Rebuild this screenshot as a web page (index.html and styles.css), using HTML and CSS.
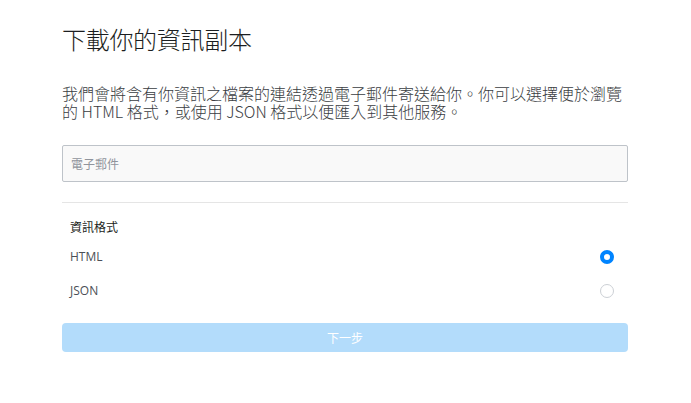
FILE: index.html
```html
<!DOCTYPE html>
<html lang="zh-Hant">
<head>
<meta charset="utf-8">
<link rel="stylesheet" href="styles.css">
</head>
<body>
<main class="page">
  <h1 class="title">下載你的資訊副本</h1>
  <p class="desc">我們會將含有你資訊之檔案的連結透過電子郵件寄送給你。你可以選擇便於瀏覽的 HTML 格式，或使用 JSON 格式以便匯入到其他服務。</p>
  <input class="email" type="text" placeholder="電子郵件">
  <hr class="divider">
  <div class="label">資訊格式</div>
  <div class="options">
    <label class="option">
      <span class="option-text">HTML</span>
      <span class="radio radio-on"></span>
    </label>
    <label class="option">
      <span class="option-text">JSON</span>
      <span class="radio"></span>
    </label>
  </div>
  <button class="next" type="button">下一步</button>
</main>
</body>
</html>
```

FILE: styles.css
```css
html, body {
  margin: 0;
  padding: 0;
  background: #ffffff;
}
body {
  font-family: "Open Sans", "Noto Sans CJK TC", sans-serif;
  color: #4b4f56;
}
.page {
  padding: 22px 63px 0 62px;
  display: flex;
  flex-direction: column;
}
.title {
  margin: 0;
  font-family: "Noto Sans CJK TC", sans-serif;
  font-size: 24px;
  font-weight: 300;
  line-height: 34px;
  color: #1c1e21;
  letter-spacing: -0.3px;
}
.desc {
  margin: 28px 0 0;
  font-family: "Noto Sans CJK TC", sans-serif;
  font-size: 16px;
  line-height: 18px;
  font-weight: 300;
  color: #3a3d42;
}
.email {
  margin-top: 25px;
  height: 37px;
  box-sizing: border-box;
  border: 1px solid #bec3c9;
  border-radius: 2px;
  background: #f9f9f9;
  padding: 0 8px;
  font-family: "Noto Sans CJK TC", sans-serif;
  font-size: 12px;
  color: #1c1e21;
  outline: none;
}
.email::placeholder {
  color: #90949c;
}
.divider {
  margin: 20px 0 0;
  border: 0;
  border-top: 1px solid #e5e5e5;
  height: 0;
}
.label {
  margin-top: 16px;
  font-family: "Noto Sans CJK TC", sans-serif;
  font-size: 12px;
  line-height: 16px;
  font-weight: 400;
  color: #1c1e21;
  padding: 0 8px;
}
.options {
  margin-top: 5px;
  display: flex;
  flex-direction: column;
}
.option {
  display: flex;
  align-items: center;
  justify-content: space-between;
  height: 34px;
  padding: 0 14px 0 8px;
}
.option-text {
  font-size: 12px;
  line-height: 16px;
  color: #4b4f56;
}
.radio {
  width: 14px;
  height: 14px;
  box-sizing: border-box;
  border-radius: 50%;
  border: 1px solid #ccd0d5;
  background: #fff;
}
.radio-on {
  border: 4px solid #0084ff;
}
.next {
  margin-top: 15px;
  height: 29px;
  border: 0;
  border-radius: 4px;
  background: #b3dcfb;
  color: #ffffff;
  font-family: "Noto Sans CJK TC", sans-serif;
  font-size: 12px;
  font-weight: 400;
}
```
